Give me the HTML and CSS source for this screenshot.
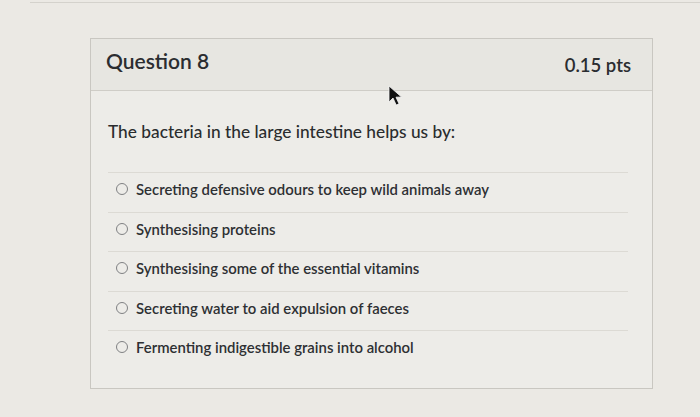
FILE: index.html
```html
<!DOCTYPE html>
<html>
<head>
<meta charset="utf-8">
<link rel="stylesheet" href="styles.css">
</head>
<body>
<div class="topline"></div>
<div class="card">
  <div class="header">
    <span class="title">Question 8</span>
    <span class="pts">0.15 pts</span>
  </div>
  <div class="body">
    <p class="question">The bacteria in the large intestine helps us by:</p>
    <ul class="answers">
      <li class="answer"><span class="radio"></span>Secreting defensive odours to keep wild animals away</li>
      <li class="answer"><span class="radio"></span>Synthesising proteins</li>
      <li class="answer"><span class="radio"></span>Synthesising some of the essential vitamins</li>
      <li class="answer"><span class="radio"></span>Secreting water to aid expulsion of faeces</li>
      <li class="answer"><span class="radio"></span>Fermenting indigestible grains into alcohol</li>
    </ul>
  </div>
  <svg class="cursor" width="16" height="22" viewBox="0 0 16 22">
    <path d="M1 1 L1 17 L5 13 L8.2 20 L11 18.8 L8 12.2 L13.5 12 Z" fill="#111" stroke="#f4f4f4" stroke-width="0.8"/>
  </svg>
</div>
</body>
</html>
```
FILE: styles.css
```css
html, body {
  margin: 0;
  padding: 0;
  background: #ebe9e4;
  font-family: Lato, "Open Sans", sans-serif;
  color: #2a2c2e;
  width: 700px;
  height: 417px;
  overflow: hidden;
}
.topline {
  height: 2px;
  margin-left: 30px;
  border-bottom: 1px solid #d4d2cc;
}
.card {
  position: relative;
  margin: 35px 0 0 90px;
  width: 561px;
  height: 349px;
  border: 1px solid #c9c7c1;
  background: #edece8;
  box-sizing: content-box;
}
.header {
  height: 51px;
  display: flex;
  align-items: center;
  justify-content: space-between;
  padding: 0 21px 0 15px;
  background: #e7e6e1;
  border-bottom: 1px solid #cfcdc7;
}
.title {
  font-size: 21px;
  font-weight: 600;
  color: #2b2d30;
  margin-top: -8px;
}
.pts {
  font-size: 18.5px;
  font-weight: 600;
  color: #2b2d30;
  margin-top: 0px;
}
.body {
  padding: 0 24px 0 17px;
}
.question {
  margin: 30px 0 29px 0;
  font-size: 17.3px;
  line-height: 22px;
  font-weight: 500;
}
.answers {
  list-style: none;
  margin: 0;
  padding: 0;
}
.answer {
  display: flex;
  align-items: center;
  height: 39px;
  padding-bottom: 6px;
  box-sizing: border-box;
  border-top: 1px solid #dcdad4;
  font-size: 14.9px;
  font-weight: 600;
  color: #2e3033;
  margin-bottom: 0.5px;
}
.radio {
  width: 10px;
  height: 10px;
  border: 1.5px solid #808183;
  border-radius: 50%;
  margin: 0 8px 0 8px;
  flex: none;
}
.cursor {
  position: absolute;
  left: 297px;
  top: 46px;
}
```
